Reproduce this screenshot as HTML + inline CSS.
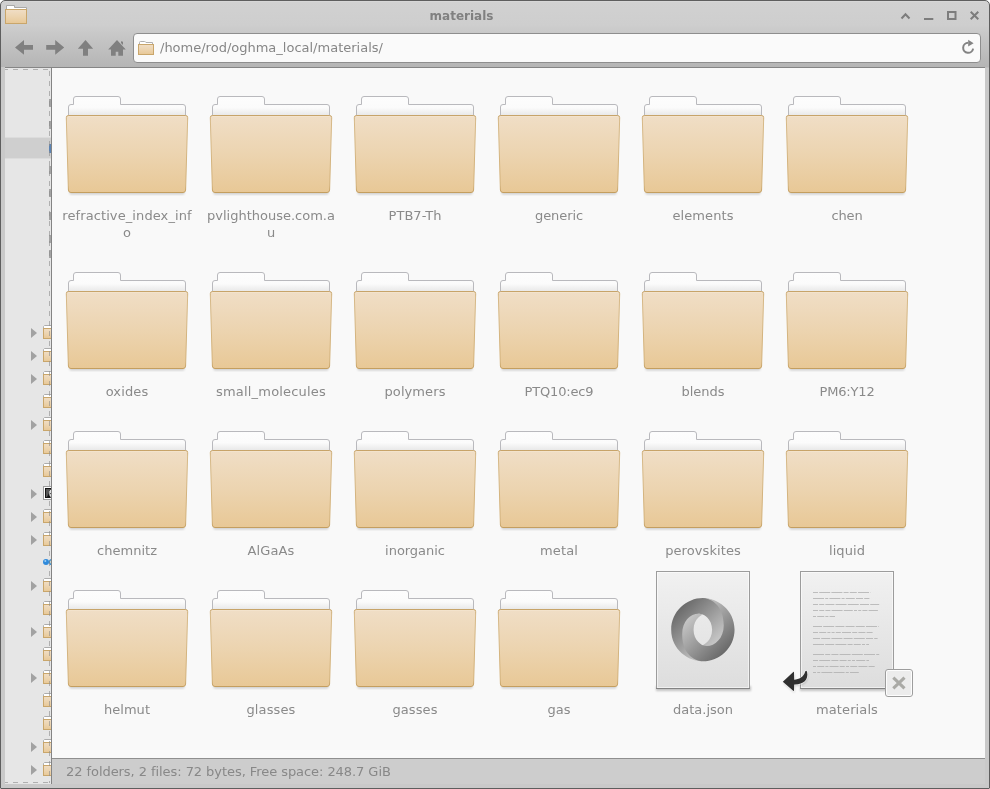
<!DOCTYPE html><html><head><meta charset="utf-8"><title>materials</title><style>

html,body{margin:0;padding:0;}
body{width:990px;height:789px;overflow:hidden;background:#fff;font-family:"DejaVu Sans","Liberation Sans",sans-serif;font-size:13.33px;color:#7e7e7e;position:relative;}
#win{position:absolute;left:0;top:0;width:988px;height:787px;border:1px solid #5e5e5e;border-radius:5px 5px 1px 1px;background:linear-gradient(#dadada 0px,#d1d1d1 1.500px,#cecece 24px,#c7c7c7 34px,#b5b5b5 66px,#c9c9c9 67px);overflow:hidden;will-change:transform;}
#title{position:absolute;left:0;top:7px;width:921px;text-align:center;font-weight:bold;font-size:12px;color:#808080;line-height:16px;}
#addr{position:absolute;left:132px;top:32px;width:848px;height:30px;border:1px solid #8e8e8e;border-radius:4px;background:#fafafa;box-sizing:border-box;}
#addr span{position:absolute;left:26px;top:6px;font-size:13px;line-height:16px;color:#868686;white-space:nowrap;}
#side{position:absolute;left:4px;top:66px;width:46px;height:717px;background:#e6e6e6;border-top:1px solid #858585;box-sizing:border-box;}
#sel{position:absolute;left:4px;top:136px;width:46px;height:22px;background:#cfcfcf;border-top:1px solid #dcdcdc;border-bottom:1px solid #dcdcdc;box-sizing:border-box;}
#div{position:absolute;left:50px;top:66px;width:1px;height:717px;background:#848484;}
#main{position:absolute;left:51px;top:66px;width:933px;height:691px;background:#f9f9f9;border-top:1px solid #858585;box-sizing:border-box;}
#status{position:absolute;left:51px;top:757px;width:933px;height:26px;background:#cdcdcd;border-top:1px solid #8f8f8f;box-sizing:border-box;}
#status span{position:absolute;left:14px;top:5px;font-size:13px;letter-spacing:-0.062px;line-height:16px;color:#888;white-space:nowrap;}
.lbl{position:absolute;width:140px;text-align:center;line-height:17px;font-size:13px;color:#8a8a8a;}
svg{position:absolute;overflow:visible;}

</style></head><body>
<svg width="0" height="0" style="left:0;top:0"><defs>
<linearGradient id="fg" x1="0" y1="0" x2="0" y2="1"><stop offset="0" stop-color="#f0dec6"/><stop offset="0.5" stop-color="#ecd4b0"/><stop offset="1" stop-color="#e8c896"/></linearGradient>
<linearGradient id="fs" gradientUnits="userSpaceOnUse" x1="0" y1="19" x2="0" y2="97"><stop offset="0" stop-color="#c6a267"/><stop offset="0.080" stop-color="#d6b988"/><stop offset="0.900" stop-color="#d2b078"/><stop offset="1" stop-color="#c39d5e"/></linearGradient>
<linearGradient id="pg" x1="0" y1="0" x2="0" y2="1"><stop offset="0" stop-color="#fdfdfd"/><stop offset="0.55" stop-color="#fbfbfb"/><stop offset="1" stop-color="#e4e4e4"/></linearGradient>
<linearGradient id="dg" x1="0" y1="0" x2="0" y2="1"><stop offset="0" stop-color="#f1f1f1"/><stop offset="1" stop-color="#dddddd"/></linearGradient>
<linearGradient id="ja" gradientUnits="userSpaceOnUse" x1="23" y1="23" x2="136" y2="136"><stop offset="0" stop-color="#6a6a6a"/><stop offset="1" stop-color="#dedede"/></linearGradient>
<linearGradient id="jb" gradientUnits="userSpaceOnUse" x1="136" y1="136" x2="23" y2="23"><stop offset="0" stop-color="#6a6a6a"/><stop offset="1" stop-color="#dedede"/></linearGradient>
<filter id="blur1" x="-30%" y="-30%" width="160%" height="160%"><feGaussianBlur stdDeviation="1"/></filter>
<g id="bigfolder">
<rect x="4.500" y="94" width="115" height="4.500" rx="1.500" fill="#000" opacity="0.17" filter="url(#blur1)"/>
<path d="M3.5 21 V11 Q3.5 8.5 6 8.5 H8.5 V3 Q8.5 0.5 11 0.5 H53 Q55.5 0.5 55.5 3 V8.5 H118 Q120.500 8.500 120.500 11 V21 Z" fill="url(#pg)" stroke="#b9b9bd" stroke-width="1"/>
<path d="M3.400 19.500 H120.600 Q122.800 19.500 122.700 21.700 L120.600 94 Q120.500 96.500 118 96.500 H6 Q3.500 96.500 3.400 94 L1.300 21.700 Q1.200 19.500 3.400 19.500 Z" fill="url(#fg)" stroke="url(#fs)" stroke-width="1"/>
<path d="M3.500 20.500 H120.500" stroke="#f5e6d0" stroke-width="1" opacity="0.7"/>
</g>
<g id="sfolder">
<path d="M1.500 5 V0.500 H9.500 V2.500 H21.500 V5 Z" fill="#fff" stroke="#a9a9a9" stroke-width="1"/>
<rect x="0.500" y="4.500" width="21" height="14" fill="url(#fg)" stroke="#c9a66b" stroke-width="1"/>
</g>
<g id="afolder">
<path d="M1.500 4 V1.500 Q1.500 0.500 2.500 0.500 H6.500 Q7.500 0.500 8 1.500 H14.500 V4 Z" fill="#fff" stroke="#b0b0b0" stroke-width="1"/>
<rect x="0.500" y="3.500" width="15" height="10" fill="url(#fg)" stroke="#c9a66b" stroke-width="1"/>
</g>
<g id="tfolder">
<path d="M0.500 3 V0.500 L1.500 -0.500 H9 V3 Z" fill="#fff" stroke="#adadad" stroke-width="1"/>
<rect x="0.500" y="2.500" width="12" height="10" fill="url(#fg)" stroke="#c9a66b" stroke-width="1"/>
</g>
</defs></svg>
<div id="win">
<div id="title">materials</div>
<svg style="left:4px;top:4px" width="22" height="19" viewBox="0 0 22 19"><use href="#sfolder"/></svg>
<svg style="left:0;top:0" width="988" height="66" viewBox="1 1 988 66" fill="none" stroke="#7d7d7d" stroke-width="2">
<path d="M901.500 18.500 L905.500 14.300 L909.500 18.500"/>
<path d="M924 19 H933.300"/>
<rect x="948" y="12" width="7.500" height="7"/>
<path d="M970.700 11.800 L978.300 19.200 M978.300 11.800 L970.700 19.200"/>
<g fill="#808080" stroke="none">
<path d="M15 47.400 L24 40 V45 H33 V49.800 H24 V54.800 Z"/>
<path d="M64.200 47.400 L55.200 40 V45 H46.200 V49.800 H55.200 V54.800 Z"/>
<path d="M85.500 40 L93.200 48.800 H88 V55.800 H83 V48.800 H77.800 Z"/>
<path d="M117 40 L125.800 49.500 H123 V55.800 H118.300 V51.800 H115.700 V55.800 H111 V49.500 H108.200 Z M121 41.200 L123 41.800 V45 L121 43 Z"/>
</g>
</svg>
<div id="addr"><span>/home/rod/oghma_local/materials/</span></div>
<svg style="left:137px;top:40px" width="16" height="14" viewBox="0 0 16 14"><use href="#afolder"/></svg>
<svg style="left:955px;top:35px" width="24" height="24" viewBox="956 36 24 24" fill="none">
<path d="M973.100 48.600 A5 5 0 1 1 968.200 42.800" stroke-width="2" stroke="#838383"/>
<path d="M968.200 39.800 L973.600 43.200 L968.200 46.400 Z" fill="#838383"/>
</svg>
<div id="side"></div><div id="sel"></div>
<svg style="left:0;top:0" width="50" height="787" viewBox="1 1 50 787"><path d="M31 328 L37 333 L31 338 Z" fill="#a2a2a2"/><use href="#tfolder" x="43" y="326"/><path d="M31 351 L37 356 L31 361 Z" fill="#a2a2a2"/><use href="#tfolder" x="43" y="349"/><path d="M31 374 L37 379 L31 384 Z" fill="#a2a2a2"/><use href="#tfolder" x="43" y="372"/><use href="#tfolder" x="43" y="395"/><path d="M31 420 L37 425 L31 430 Z" fill="#a2a2a2"/><use href="#tfolder" x="43" y="418"/><use href="#tfolder" x="43" y="441"/><use href="#tfolder" x="43" y="464"/><path d="M31 489 L37 494 L31 499 Z" fill="#a2a2a2"/><rect x="43.500" y="486.5" width="12" height="13" fill="#fdfdfd" stroke="#9c9c9c"/><rect x="45" y="488" width="10" height="10" fill="#141414"/><path d="M46 489 h5 l-4 8 h-1 Z" fill="#555"/><path d="M49 491 h3 v2 h-2 l2 3 v2 h-1 l-2 -4 Z M50 490 h2 v1 h-2 Z" fill="#e0e0e0"/><path d="M31 512 L37 517 L31 522 Z" fill="#a2a2a2"/><use href="#tfolder" x="43" y="510"/><path d="M31 535 L37 540 L31 545 Z" fill="#a2a2a2"/><use href="#tfolder" x="43" y="533"/><circle cx="46" cy="562" r="3" fill="#2f8adb"/><circle cx="52" cy="562" r="2.500" fill="#f3e6c6" stroke="#2b86cf" stroke-width="1.200"/><circle cx="45.300" cy="561" r="1" fill="#9fd0f7"/><path d="M31 581 L37 586 L31 591 Z" fill="#a2a2a2"/><use href="#tfolder" x="43" y="579"/><use href="#tfolder" x="43" y="602"/><path d="M31 627 L37 632 L31 637 Z" fill="#a2a2a2"/><use href="#tfolder" x="43" y="625"/><use href="#tfolder" x="43" y="648"/><path d="M31 673 L37 678 L31 683 Z" fill="#a2a2a2"/><use href="#tfolder" x="43" y="671"/><use href="#tfolder" x="43" y="694"/><use href="#tfolder" x="43" y="717"/><path d="M31 742 L37 747 L31 752 Z" fill="#a2a2a2"/><use href="#tfolder" x="43" y="740"/><path d="M31 765 L37 770 L31 775 Z" fill="#a2a2a2"/><use href="#tfolder" x="43" y="763"/><rect x="49" y="144" width="2" height="9" fill="#5b83b3"/><rect x="49" y="99" width="2" height="8" fill="#a4a4a4"/><rect x="49" y="121" width="2" height="8" fill="#a4a4a4"/><rect x="49" y="166" width="2" height="8" fill="#a4a4a4"/><rect x="49" y="189" width="2" height="8" fill="#a4a4a4"/><rect x="49" y="212" width="2" height="8" fill="#a4a4a4"/><rect x="49" y="235" width="2" height="8" fill="#a4a4a4"/><rect x="49" y="250" width="2" height="8" fill="#a4a4a4"/><g stroke="#8c8c8c" stroke-width="1" stroke-dasharray="5 5" fill="none" opacity="0.600"><path d="M3 69.500 H50"/><path d="M49.500 71 V783"/><path d="M3 782.500 H50"/></g><rect x="1" y="67" width="4" height="720" fill="#c9c9c9"/></svg>
<div id="div"></div>
<div id="main"></div>
<div id="status"><span>22 folders, 2 files: 72 bytes, Free space: 248.7 GiB</span></div>
<svg style="left:64px;top:95px" width="124" height="102" viewBox="0 0 124 102"><use href="#bigfolder"/></svg>
<div class="lbl" style="left:56px;top:206.0px;letter-spacing:0.100px">refractive_index_inf<br>o</div>
<svg style="left:208px;top:95px" width="124" height="102" viewBox="0 0 124 102"><use href="#bigfolder"/></svg>
<div class="lbl" style="left:200px;top:206.0px;letter-spacing:0.000px">pvlighthouse.com.a<br>u</div>
<svg style="left:352px;top:95px" width="124" height="102" viewBox="0 0 124 102"><use href="#bigfolder"/></svg>
<div class="lbl" style="left:344px;top:206.0px;letter-spacing:0.022px">PTB7-Th</div>
<svg style="left:496px;top:95px" width="124" height="102" viewBox="0 0 124 102"><use href="#bigfolder"/></svg>
<div class="lbl" style="left:488px;top:206.0px;letter-spacing:-0.085px">generic</div>
<svg style="left:640px;top:95px" width="124" height="102" viewBox="0 0 124 102"><use href="#bigfolder"/></svg>
<div class="lbl" style="left:632px;top:206.0px;letter-spacing:0.078px">elements</div>
<svg style="left:784px;top:95px" width="124" height="102" viewBox="0 0 124 102"><use href="#bigfolder"/></svg>
<div class="lbl" style="left:776px;top:206.0px;letter-spacing:-0.157px">chen</div>
<svg style="left:64px;top:271px" width="124" height="102" viewBox="0 0 124 102"><use href="#bigfolder"/></svg>
<div class="lbl" style="left:56px;top:382.0px;letter-spacing:0.120px">oxides</div>
<svg style="left:208px;top:271px" width="124" height="102" viewBox="0 0 124 102"><use href="#bigfolder"/></svg>
<div class="lbl" style="left:200px;top:382.0px;letter-spacing:0.191px">small_molecules</div>
<svg style="left:352px;top:271px" width="124" height="102" viewBox="0 0 124 102"><use href="#bigfolder"/></svg>
<div class="lbl" style="left:344px;top:382.0px;letter-spacing:0.088px">polymers</div>
<svg style="left:496px;top:271px" width="124" height="102" viewBox="0 0 124 102"><use href="#bigfolder"/></svg>
<div class="lbl" style="left:488px;top:382.0px;letter-spacing:-0.149px">PTQ10:ec9</div>
<svg style="left:640px;top:271px" width="124" height="102" viewBox="0 0 124 102"><use href="#bigfolder"/></svg>
<div class="lbl" style="left:632px;top:382.0px;letter-spacing:-0.022px">blends</div>
<svg style="left:784px;top:271px" width="124" height="102" viewBox="0 0 124 102"><use href="#bigfolder"/></svg>
<div class="lbl" style="left:776px;top:382.0px;letter-spacing:-0.169px">PM6:Y12</div>
<svg style="left:64px;top:430px" width="124" height="102" viewBox="0 0 124 102"><use href="#bigfolder"/></svg>
<div class="lbl" style="left:56px;top:541.0px;letter-spacing:0.022px">chemnitz</div>
<svg style="left:208px;top:430px" width="124" height="102" viewBox="0 0 124 102"><use href="#bigfolder"/></svg>
<div class="lbl" style="left:200px;top:541.0px;letter-spacing:0.131px">AlGaAs</div>
<svg style="left:352px;top:430px" width="124" height="102" viewBox="0 0 124 102"><use href="#bigfolder"/></svg>
<div class="lbl" style="left:344px;top:541.0px;letter-spacing:-0.042px">inorganic</div>
<svg style="left:496px;top:430px" width="124" height="102" viewBox="0 0 124 102"><use href="#bigfolder"/></svg>
<div class="lbl" style="left:488px;top:541.0px;letter-spacing:0.133px">metal</div>
<svg style="left:640px;top:430px" width="124" height="102" viewBox="0 0 124 102"><use href="#bigfolder"/></svg>
<div class="lbl" style="left:632px;top:541.0px;letter-spacing:0.089px">perovskites</div>
<svg style="left:784px;top:430px" width="124" height="102" viewBox="0 0 124 102"><use href="#bigfolder"/></svg>
<div class="lbl" style="left:776px;top:541.0px;letter-spacing:0.068px">liquid</div>
<svg style="left:64px;top:589px" width="124" height="102" viewBox="0 0 124 102"><use href="#bigfolder"/></svg>
<div class="lbl" style="left:56px;top:700.0px;letter-spacing:0.025px">helmut</div>
<svg style="left:208px;top:589px" width="124" height="102" viewBox="0 0 124 102"><use href="#bigfolder"/></svg>
<div class="lbl" style="left:200px;top:700.0px;letter-spacing:0.121px">glasses</div>
<svg style="left:352px;top:589px" width="124" height="102" viewBox="0 0 124 102"><use href="#bigfolder"/></svg>
<div class="lbl" style="left:344px;top:700.0px;letter-spacing:0.077px">gasses</div>
<svg style="left:496px;top:589px" width="124" height="102" viewBox="0 0 124 102"><use href="#bigfolder"/></svg>
<div class="lbl" style="left:488px;top:700.0px;letter-spacing:0.000px">gas</div>
<div class="lbl" style="left:632px;top:700.0px;letter-spacing:0.000px">data.json</div>
<div class="lbl" style="left:776px;top:700.0px;letter-spacing:0.107px">materials</div>
<svg style="left:0;top:0" width="988" height="787" viewBox="1 1 988 787"><rect x="656" y="686" width="95" height="5" fill="#000" opacity="0.22" filter="url(#blur1)"/><rect x="656.5" y="571.500" width="93" height="117" fill="url(#dg)" stroke="#9c9c9c" stroke-width="1"/><rect x="657.5" y="572.500" width="91" height="115" fill="none" stroke="#fff" stroke-opacity="0.550"/><path d="M656 688.500 h94" stroke="#838383" stroke-width="1"/><rect x="800" y="686" width="95" height="5" fill="#000" opacity="0.22" filter="url(#blur1)"/><rect x="800.5" y="571.500" width="93" height="117" fill="url(#dg)" stroke="#9c9c9c" stroke-width="1"/><rect x="801.5" y="572.500" width="91" height="115" fill="none" stroke="#fff" stroke-opacity="0.550"/><path d="M800 688.500 h94" stroke="#838383" stroke-width="1"/><g transform="translate(671.200 598) scale(0.396)">
<path d="M79.865 119.100c35.398 48.255 70.040-13.469 69.989-50.587C149.794 24.627 105.313.099 79.836.099 38.944.099 0 33.895 0 80.135 0 131.531 44.640 160 79.836 160c-7.965-1.147-34.506-6.834-34.863-67.967-.240-41.347 13.488-57.866 34.805-50.599.477.177 23.514 9.265 23.514 38.951 0 29.560-23.427 38.715-23.427 38.715z" fill="url(#ja)"/>
<path d="M79.823 41.401C56.433 33.339 27.780 52.617 27.780 91.230c0 63.048 46.721 68.770 52.384 68.770C121.056 160 160 126.204 160 79.964 160 28.568 115.360.099 80.164.099c9.748-1.350 52.541 10.550 52.541 69.037 0 38.141-31.953 58.905-52.735 50.033-.477-.177-23.514-9.265-23.514-38.951 0-29.560 23.367-38.818 23.367-38.818z" fill="url(#jb)"/>
</g><path d="M813.0 592.5 h5.0 M819.2 592.5 h11.0 M831.4 592.5 h11.0 M843.6 592.5 h5.0 M849.8 592.5 h7.0 M858.0 592.5 h11.0 M870.2 592.5 h0.3" stroke="#a8a8a8" stroke-width="0.700" fill="none"/><path d="M813.0 598.5 h11.0 M825.2 598.5 h3.0 M829.4 598.5 h11.0 M841.6 598.5 h3.0 M845.8 598.5 h9.0 M856.0 598.5 h7.0 M864.2 598.5 h5.2" stroke="#a8a8a8" stroke-width="0.700" fill="none"/><path d="M813.0 604.5 h5.0 M819.2 604.5 h5.0 M825.4 604.5 h9.0 M835.6 604.5 h11.0 M847.8 604.5 h11.0 M860.0 604.5 h9.0 M870.2 604.5 h9.0" stroke="#a8a8a8" stroke-width="0.700" fill="none"/><path d="M813.0 610.5 h5.0 M819.2 610.5 h5.0 M825.4 610.5 h5.0 M831.6 610.5 h11.0 M843.8 610.5 h9.0 M854.0 610.5 h3.0 M858.2 610.5 h3.0 M862.4 610.5 h5.0 M868.6 610.5 h9.3" stroke="#a8a8a8" stroke-width="0.700" fill="none"/><path d="M813.0 616.5 h3.0 M817.2 616.5 h7.0 M825.4 616.5 h3.0 M829.6 616.5 h5.4" stroke="#a8a8a8" stroke-width="0.700" fill="none"/><path d="M813.0 626.5 h9.0 M823.2 626.5 h11.0 M835.4 626.5 h9.0 M845.6 626.5 h9.0 M855.8 626.5 h9.0 M866.0 626.5 h11.0 M878.2 626.5 h0.6" stroke="#a8a8a8" stroke-width="0.700" fill="none"/><path d="M813.0 632.5 h5.0 M819.2 632.5 h7.0 M827.4 632.5 h3.0 M831.6 632.5 h3.0 M835.8 632.5 h5.0 M842.0 632.5 h9.0 M852.2 632.5 h5.0 M858.4 632.5 h7.0 M866.6 632.5 h6.0" stroke="#a8a8a8" stroke-width="0.700" fill="none"/><path d="M813.0 638.5 h7.0 M821.2 638.5 h9.0 M831.4 638.5 h11.0 M843.6 638.5 h9.0 M853.8 638.5 h11.0 M866.0 638.5 h7.0 M874.2 638.5 h3.4" stroke="#a8a8a8" stroke-width="0.700" fill="none"/><path d="M813.0 644.5 h11.0 M825.2 644.5 h9.0 M835.4 644.5 h11.0 M847.6 644.5 h5.0 M853.8 644.5 h7.0 M862.0 644.5 h3.0 M866.2 644.5 h2.8" stroke="#a8a8a8" stroke-width="0.700" fill="none"/><path d="M813.0 654.5 h11.0 M825.2 654.5 h5.0 M831.4 654.5 h7.0 M839.6 654.5 h11.0 M851.8 654.5 h11.0 M864.0 654.5 h11.0 M876.2 654.5 h3.0" stroke="#a8a8a8" stroke-width="0.700" fill="none"/><path d="M813.0 660.5 h5.0 M819.2 660.5 h11.0 M831.4 660.5 h7.0 M839.6 660.5 h7.0 M847.8 660.5 h3.0 M852.0 660.5 h3.0 M856.2 660.5 h9.0 M866.4 660.5 h2.6" stroke="#a8a8a8" stroke-width="0.700" fill="none"/><path d="M813.0 666.5 h3.0 M817.2 666.5 h7.0 M825.4 666.5 h3.0 M829.6 666.5 h9.0 M839.8 666.5 h5.0 M846.0 666.5 h3.0 M850.2 666.5 h7.0 M858.4 666.5 h9.0 M868.6 666.5 h6.1" stroke="#a8a8a8" stroke-width="0.700" fill="none"/><path d="M813.0 672.5 h3.0 M817.2 672.5 h3.0 M821.4 672.5 h11.0 M833.6 672.5 h11.0 M845.8 672.5 h3.0 M850.0 672.5 h8.8" stroke="#a8a8a8" stroke-width="0.700" fill="none"/><g><path id="lnk" d="M782.800 681.700 L793.300 672 Q794 671.400 794 672.500 L794.200 679.700 C799 679.600 803.800 677.200 805.200 671.600 Q806.300 669.800 807.100 672 C808.700 680.200 803 684.700 794.200 684.400 L794 690.200 Q794 691.300 793.200 690.700 Z" fill="#000" opacity="0.18" transform="translate(0.500 1.600)" filter="url(#blur1)"/><path d="M782.800 681.700 L793.300 672 Q794 671.400 794 672.500 L794.200 679.700 C799 679.600 803.800 677.200 805.200 671.600 Q806.300 669.800 807.100 672 C808.700 680.200 803 684.700 794.200 684.400 L794 690.200 Q794 691.300 793.200 690.700 Z" fill="#303030" stroke="#f6f6f6" stroke-width="1.600" stroke-opacity="0.75" paint-order="stroke"/></g><rect x="885.500" y="669.500" width="27" height="27" rx="2.500" fill="#fdfdfd" stroke="#9d9d9d"/><rect x="887" y="671" width="24" height="24" rx="1" fill="#ececec"/><path d="M893.300 677.600 L904.500 688.300 M904.500 677.600 L893.300 688.300" stroke="#aaaaa6" stroke-width="3.100"/></svg>
</div></body></html>
